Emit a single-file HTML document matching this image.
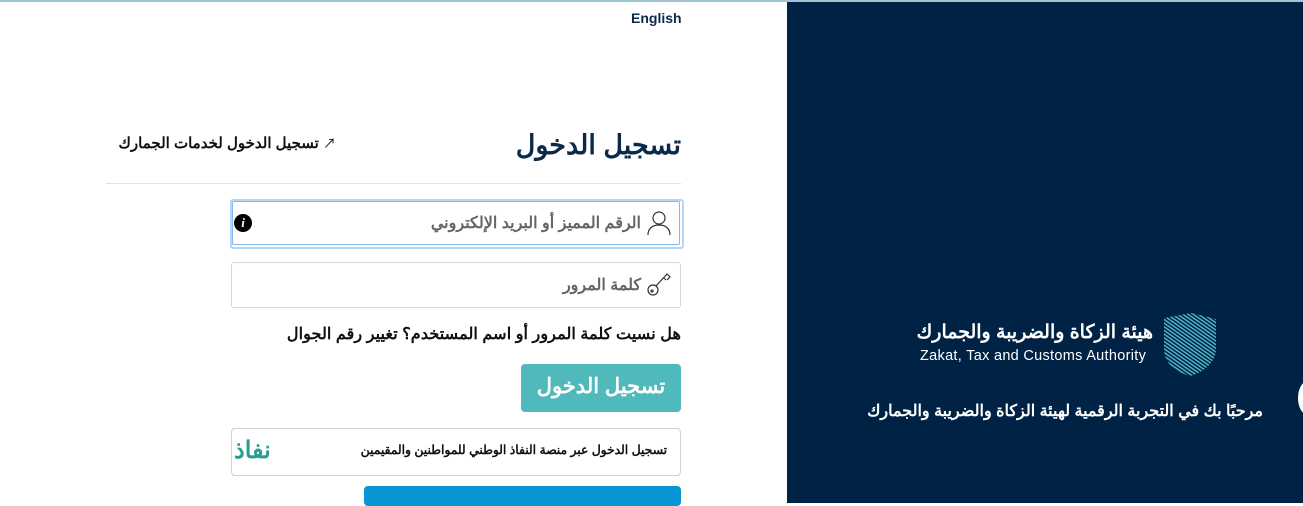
<!DOCTYPE html>
<html><head><meta charset="utf-8"><style>
body{margin:0;width:1303px;height:503px;overflow:hidden;background:#fff;font-family:"Liberation Sans","Noto Sans CJK SC",sans-serif;position:relative}
.a{position:absolute}
.r{direction:rtl}
</style></head><body>
<div class="a" style="left:0;top:0;width:1303px;height:2px;background:#9ec6cf"></div>
<div class="a" style="left:787px;top:2px;width:516px;height:501px;background:#002244"></div>
<div class="a" style="left:631px;top:10px;font-size:14px;font-weight:bold;color:#0b2a4a">English</div>

<div class="a r" style="right:622px;top:130px;font-size:27px;font-weight:bold;color:#0b2a4a">تسجيل الدخول</div>
<div class="a r" style="left:106px;top:133px;width:230px;font-size:15px;font-weight:bold;color:#111;text-align:right"><span style="font-size:13px;font-weight:normal">↗</span> تسجيل الدخول لخدمات الجمارك</div>
<div class="a" style="left:106px;top:183px;width:575px;height:1px;background:#e2e2e2"></div>

<div class="a" style="left:230px;top:199px;width:450px;height:46px;border:2px solid #b5d6f7;border-radius:3px"></div>
<div class="a" style="left:232px;top:201px;width:446px;height:42px;border:1px solid #84b7ec;border-radius:2px"></div>
<svg class="a" style="left:645px;top:208px" width="28" height="28" viewBox="0 0 28 28" fill="none" stroke="#333" stroke-width="1.2"><circle cx="14" cy="10" r="6"/><path d="M3 27c0-7 5-10 11-10s11 3 11 10"/></svg>
<div class="a r" style="right:662px;top:213px;font-size:16px;font-weight:bold;color:#666">الرقم المميز أو البريد الإلكتروني</div>
<div class="a" style="left:234px;top:214px;width:18px;height:18px;border-radius:50%;background:#000;color:#fff;font:bold 13px 'Liberation Serif',serif;text-align:center;line-height:18px;font-style:italic">i</div>

<div class="a" style="left:231px;top:262px;width:448px;height:44px;border:1px solid #d8d8dc;border-radius:3px"></div>
<svg class="a" style="left:645px;top:270px" width="28" height="28" viewBox="0 0 28 28" fill="none" stroke="#333" stroke-width="1.2"><circle cx="8" cy="20" r="5"/><circle cx="7" cy="21" r="1"/><path d="M11 16L22 4l3 3-3 3M19 8l2 2"/></svg>
<div class="a r" style="right:662px;top:275px;font-size:16px;font-weight:bold;color:#666">كلمة المرور</div>

<div class="a r" style="right:622px;top:324px;font-size:16.2px;font-weight:bold;color:#111">هل نسيت كلمة المرور أو اسم المستخدم؟ تغيير رقم الجوال</div>

<div class="a r" style="left:521px;top:364px;width:160px;height:48px;background:#50b9bb;border-radius:4px;color:#fff;font-size:21px;font-weight:bold;text-align:center;line-height:46px">تسجيل الدخول</div>

<div class="a" style="left:231px;top:428px;width:448px;height:46px;border:1px solid #d0d0d0;border-radius:4px"></div>
<div class="a r" style="right:636px;top:443px;font-size:12.3px;font-weight:bold;color:#111">تسجيل الدخول عبر منصة النفاذ الوطني للمواطنين والمقيمين</div>
<div class="a r" style="left:234px;top:436px;font-size:24px;font-weight:bold;color:#2a9d8f">نفاذ</div>
<div class="a" style="left:364px;top:486px;width:317px;height:20px;background:#0a96d4;border-radius:4px"></div>

<svg class="a" style="left:1160px;top:312px" width="58" height="64" viewBox="0 0 58 64"><defs><pattern id="p" width="3" height="3" patternUnits="userSpaceOnUse" patternTransform="rotate(35)"><rect width="3" height="1.5" fill="#4fb3c6"/></pattern></defs><path d="M4 6l27-5 25 6v30c0 14-14 24-26 27C16 60 4 52 4 36z" fill="url(#p)"/></svg>
<div class="a r" style="right:150px;top:321px;font-size:19px;font-weight:bold;color:#fff">هيئة الزكاة والضريبة والجمارك</div>
<div class="a" style="left:920px;top:348px;font-size:14.5px;color:#fff;letter-spacing:0.3px">Zakat, Tax and Customs Authority</div>
<div class="a r" style="right:40px;top:401px;font-size:16px;font-weight:bold;color:#fff">مرحبًا بك في التجربة الرقمية لهيئة الزكاة والضريبة والجمارك</div>
<div class="a" style="left:1298px;top:381px;width:20px;height:34px;border-radius:50%;background:#fff"></div>
</body></html>
